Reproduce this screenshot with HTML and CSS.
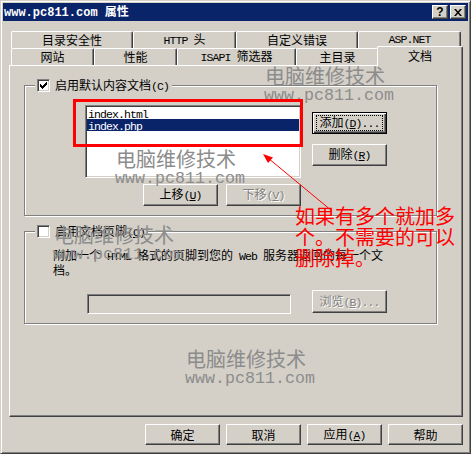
FILE: index.html
```html
<!DOCTYPE html>
<html lang="zh-CN">
<head>
<meta charset="utf-8">
<title>www.pc811.com 属性</title>
<link rel="stylesheet" href="styles.css">
</head>
<body>
<div class="window">
  <div class="titlebar">
    <div class="title"><span class="tm">www.pc811.com </span>属性</div>
    <div class="caps">
      <div class="cap cap-help">?</div>
      <div class="cap cap-close"><svg width="8" height="7" viewBox="0 0 8 7"><path d="M0 0h2l2 2.4L6 0h2L5 3.5 8 7H6L4 4.6 2 7H0l3-3.5z"/></svg></div>
    </div>
  </div>
  <div class="content">
    <div class="tabs">
      <div class="tabrow back">
        <div class="tab"><span>目录安全性</span></div>
        <div class="tab"><span><span class="m">HTTP </span>头</span></div>
        <div class="tab"><span>自定义错误</span></div>
        <div class="tab"><span class="m">ASP.NET</span></div>
      </div>
      <div class="tabrow front">
        <div class="tab"><span>网站</span></div>
        <div class="tab"><span>性能</span></div>
        <div class="tab"><span><span class="m">ISAPI </span>筛选器</span></div>
        <div class="tab"><span>主目录</span></div>
        <div class="tab sel"><span>文档</span></div>
      </div>
    </div>
    <div class="panel">
      <div class="group g1">
        <div class="legend">
          <span class="chk"><svg width="11" height="11" viewBox="1 1 11 11" shape-rendering="crispEdges"><path d="M3 5h1v3H3zM4 6h1v3H4zM5 7h1v3H5zM6 6h1v3H6zM7 5h1v3H7zM8 4h1v3H8zM9 3h1v3H9z"/></svg></span>
          <span class="lbl">启用默认内容文档<span class="m">(C)</span></span>
        </div>
        <div class="g1-body">
          <div class="list-col">
            <div class="listbox">
              <div class="item"><span class="m">index.html</span></div>
              <div class="item sel"><span class="m">index.php</span></div>
            </div>
            <div class="moves">
              <button class="btn"><span>上移<span class="m">(<u>U</u>)</span></span></button>
              <button class="btn dis" disabled><span>下移<span class="m">(<u>V</u>)</span></span></button>
            </div>
          </div>
          <div class="side">
            <button class="btn def"><span class="focus"><span>添加<span class="m">(<u>D</u>)...</span></span></span></button>
            <button class="btn"><span>删除<span class="m">(<u>R</u>)</span></span></button>
          </div>
        </div>
      </div>
      <div class="group g2">
        <div class="legend">
          <span class="chk"></span>
          <span class="lbl">启用文档页脚<span class="m">(<u>O</u>)</span></span>
        </div>
        <p class="desc">附加一个<span class="m"> HTML </span>格式的页脚到您的<span class="m"> Web </span>服务器返回的每一个文<br>档。</p>
        <div class="browse-row">
          <div class="input"></div>
          <button class="btn dis b23" disabled><span>浏览<span class="m">(<u>B</u>)...</span></span></button>
        </div>
      </div>
    </div>
    <div class="actions">
      <button class="btn b21">确定</button>
      <button class="btn b21">取消</button>
      <button class="btn b21"><span>应用<span class="m">(<u>A</u>)</span></span></button>
      <button class="btn b21">帮助</button>
    </div>
  </div>
  <div class="overlay">
    <div class="wm wm1"><div class="wm-cn">电脑维修技术</div><div class="wm-en">www.pc811.com</div></div>
    <div class="wm wm2"><div class="wm-cn">电脑维修技术</div><div class="wm-en">www.pc811.com</div></div>
    <div class="wm wm3"><div class="wm-cn">电脑维修技术</div><div class="wm-en">www.pc811.com</div></div>
    <div class="wm wm4"><div class="wm-cn">电脑维修技术</div><div class="wm-en">www.pc811.com</div></div>
    <div class="redbox"></div>
    <svg class="arrow" width="471" height="454" viewBox="0 0 471 454">
      <line x1="332" y1="211" x2="268" y2="158" stroke="#ff0000" stroke-width="1"/>
      <polygon points="263,154 273,157.5 268,163" fill="#ff0000"/>
    </svg>
    <div class="note">如果有多个就加多<br>个。不需要的可以<br>删除掉。</div>
  </div>
</div>
</body>
</html>
```

FILE: styles.css
```css
* { box-sizing: border-box; }
html, body { margin: 0; padding: 0; }
body {
  font-family: "Noto Sans CJK SC", "Noto Sans", sans-serif;
  font-size: 12px;
  color: #000;
  background: #d4d0c8;
}
.m {
  font-family: "Liberation Mono", monospace;
  font-size: 11.5px;
  letter-spacing: -0.9px;
}
.window {
  position: relative;
  width: 471px;
  height: 454px;
  background: #d4d0c8;
  border: 1px solid;
  border-color: #d4d0c8 #404040 #404040 #d4d0c8;
  box-shadow: inset 1px 1px #fff, inset -1px -1px #808080;
  padding: 2px;
  display: flex;
  flex-direction: column;
  overflow: hidden;
}
.titlebar {
  flex: none;
  height: 18px;
  background: #0a246a;
  display: flex;
  align-items: center;
  justify-content: space-between;
  padding: 0 2px 0 1px;
}
.title {
  color: #fff;
  font-weight: bold;
  font-size: 12px;
  line-height: 18px;
  white-space: nowrap;
}
.tm { font-family: "Liberation Mono", monospace; font-size: 12px; }
.caps { display: flex; gap: 2px; }
.cap {
  width: 16px;
  height: 14px;
  background: #d4d0c8;
  border: 1px solid;
  border-color: #fff #404040 #404040 #fff;
  box-shadow: inset -1px -1px #808080;
  display: flex;
  align-items: center;
  justify-content: center;
}
.cap-help {
  font-family: "Liberation Sans", sans-serif;
  font-weight: bold;
  font-size: 12px;
  line-height: 12px;
}
.cap-close svg { display: block; }
.content {
  flex: 1;
  display: flex;
  flex-direction: column;
  padding: 10px 5px 0 6px;
}
.tabs { margin-left: 2px; }
.tabrow { display: flex; align-items: flex-start; height: 17px; }
.tab {
  flex: none;
  height: 17px;
  background: #d4d0c8;
  border-top: 1px solid #fff;
  border-left: 1px solid #fff;
  border-right: 1px solid #404040;
  border-radius: 2px 2px 0 0;
  box-shadow: inset -1px 0 #808080;
  display: flex;
  align-items: center;
  justify-content: center;
  line-height: 12px;
  white-space: pre;
}
.back .tab:nth-child(1) { width: 122px; }
.back .tab:nth-child(2) { width: 103px; }
.back .tab:nth-child(3) { width: 122px; }
.back .tab:nth-child(4) { width: 103px; }
.front .tab:nth-child(1) { width: 83px; }
.front .tab:nth-child(2) { width: 83px; }
.front .tab:nth-child(3) { width: 119px; }
.front .tab:nth-child(4) { width: 83px; }
.front .tab:nth-child(5) { width: 86px; }
.tab.sel {
  height: 20px;
  margin: -2px -2px -1px;
  padding-bottom: 2px;
  position: relative;
  z-index: 1;
}
.panel {
  flex: none;
  height: 352px;
  border: 1px solid;
  border-color: #fff #404040 #404040 #fff;
  box-shadow: inset -1px -1px #808080;
  padding: 19px 0 0 14px;
}
.group {
  position: relative;
  width: 413px;
  border: 1px solid #808080;
  box-shadow: inset 1px 1px #fff, 1px 1px #fff;
}
.g1 { height: 131px; padding: 19px 0 0 60px; }
.g2 { height: 93px; margin-top: 15px; padding: 16px 0 0 28px; }
.legend {
  position: absolute;
  top: -7px;
  left: 10px;
  height: 13px;
  padding: 0 3px 0 2px;
  background: #d4d0c8;
  display: flex;
  align-items: center;
  gap: 5px;
  line-height: 13px;
  white-space: nowrap;
}
.chk {
  width: 13px;
  height: 13px;
  background: #fff;
  border: 1px solid;
  border-color: #808080 #fff #fff #808080;
  box-shadow: inset 1px 1px #404040, inset -1px -1px #d4d0c8;
}
.chk svg { display: block; }
.g1-body { display: flex; gap: 11px; }
.list-col { display: flex; flex-direction: column; gap: 6px; width: 216px; }
.listbox {
  width: 216px;
  height: 73px;
  background: #fff;
  border: 1px solid;
  border-color: #808080 #fff #fff #808080;
  box-shadow: inset 1px 1px #404040, inset -1px -1px #d4d0c8;
  padding: 1px;
}
.item { height: 12px; line-height: 12px; padding-left: 1px; white-space: nowrap; }
.item.sel { background: #0a246a; color: #fff; }
.moves { display: flex; justify-content: flex-end; gap: 8px; }
.side { display: flex; flex-direction: column; gap: 10px; padding-top: 7px; }
.btn {
  appearance: none;
  margin: 0;
  padding: 0;
  font: inherit;
  color: #000;
  flex: none;
  width: 75px;
  height: 22px;
  background: #d4d0c8;
  border: 1px solid;
  border-color: #fff #404040 #404040 #fff;
  border-radius: 0;
  box-shadow: inset -1px -1px #808080;
  display: flex;
  align-items: center;
  justify-content: center;
  white-space: nowrap;
  line-height: 12px;
}
.btn.def {
  border-color: #000;
  box-shadow: inset 1px 1px #fff, inset -1px -1px #404040, inset -2px -2px #808080;
}
.focus {
  width: 67px;
  height: 16px;
  border: 1px dotted #000;
  display: flex;
  align-items: center;
  justify-content: center;
}
.btn.dis { color: #808080; text-shadow: 1px 1px #fff; }
.b23 { height: 23px; }
.b21 { height: 21px; }
.desc { margin: 0; line-height: 13px; white-space: nowrap; }
.browse-row {
  display: flex;
  align-items: flex-start;
  gap: 21px;
  margin: 14px 0 0 34px;
}
.input {
  flex: none;
  width: 204px;
  height: 20px;
  margin-top: 4px;
  background: #d4d0c8;
  border: 1px solid;
  border-color: #808080 #fff #fff #808080;
  box-shadow: inset 1px 1px #404040, inset -1px -1px #d4d0c8;
}
.actions {
  display: flex;
  justify-content: flex-end;
  gap: 6px;
  margin-top: 7px;
}
.overlay {
  position: absolute;
  left: -1px;
  top: -1px;
  width: 471px;
  height: 454px;
  pointer-events: none;
}
.wm { position: absolute; color: #8c8c8c; white-space: nowrap; }
.wm-cn { font-size: 20px; line-height: 25px; padding-left: 1px; }
.wm-en { font-family: "Liberation Mono", monospace; font-size: 16.67px; line-height: 16px; }
.wm1 { left: 264px; top: 63px; }
.wm2 { left: 115px; top: 146px; }
.wm3 { left: 53px; top: 222px; }
.wm4 { left: 185px; top: 346px; }
.redbox {
  position: absolute;
  left: 73px;
  top: 99px;
  width: 230px;
  height: 48px;
  border: 3px solid #ff0000;
}
.arrow { position: absolute; left: 0; top: 0; }
.note {
  position: absolute;
  left: 295px;
  top: 205px;
  color: #ff0000;
  font-size: 20px;
  line-height: 21px;
  white-space: nowrap;
}
```
